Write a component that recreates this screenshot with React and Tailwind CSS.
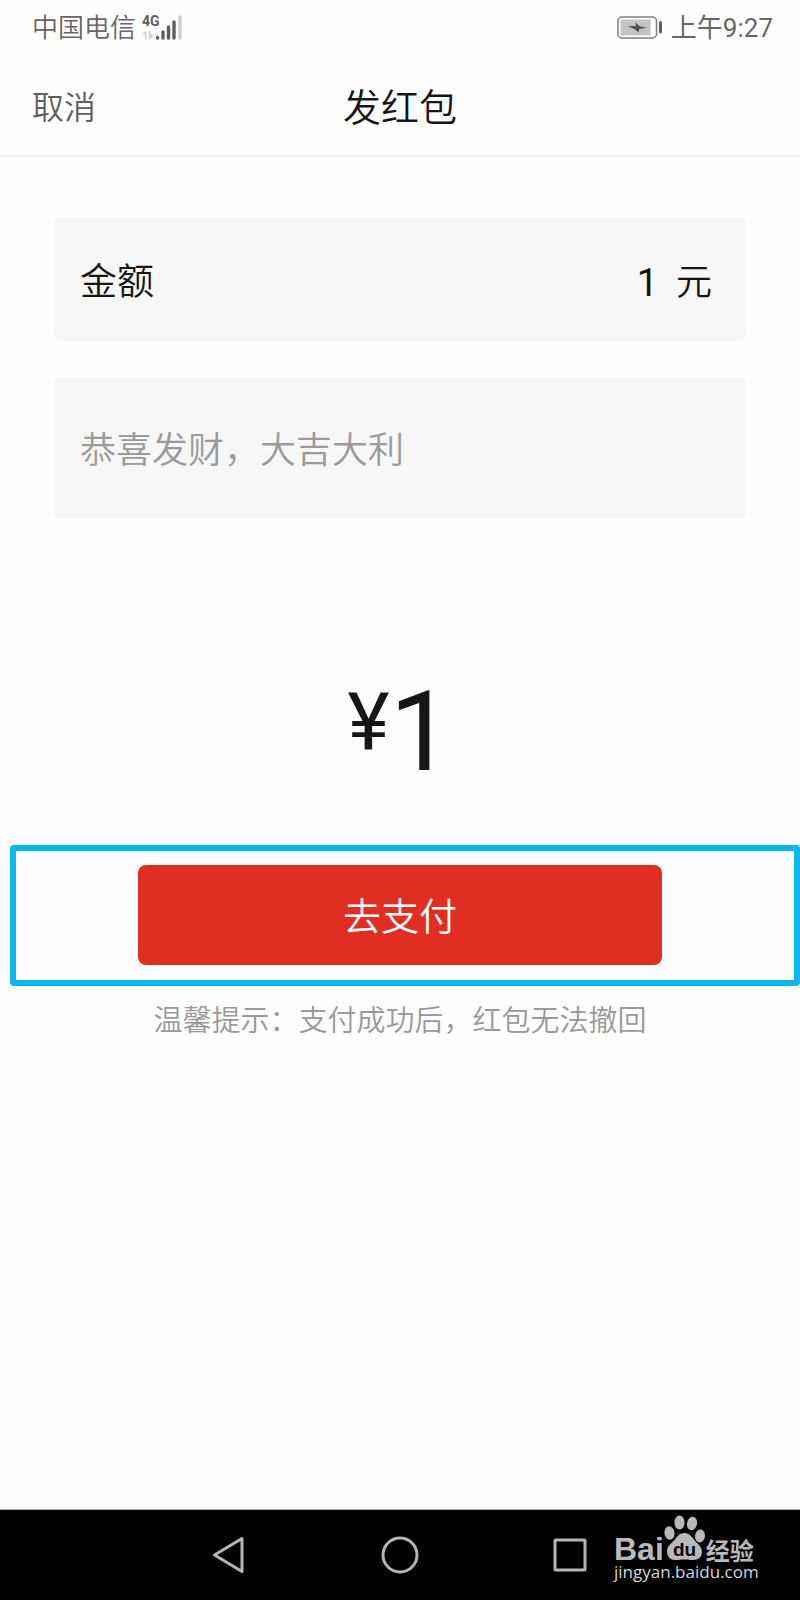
import React, { useState } from 'react';

function SignalIcon() {
  return (
    <svg width="42" height="32" viewBox="0 -3 42 32" aria-hidden="true">
      <text x="0" y="11" fontSize="14" fontWeight="700" fill="#5f5f5f" className="font-['Roboto',sans-serif]">
        4G
      </text>
      <path d="M0 19.500L4.500 15.500v9H3v-5zM7 16h1.500v3.500l4-0-5 5H7z" fill="#cfcfcf" />
      <g stroke="#5f5f5f" strokeWidth="3.4" strokeLinecap="round">
        <path d="M15.500 22.500v.5M21 17v6M26.500 12v11M32 7v16" />
      </g>
      <path d="M38 2v21" stroke="#cfcfcf" strokeWidth="3.4" strokeLinecap="round" />
    </svg>
  );
}

function BatteryIcon() {
  return (
    <svg width="46" height="24" viewBox="0 0 46 24" aria-hidden="true">
      <rect x="1" y="1" width="38.500" height="21" rx="4" fill="#fff" stroke="#7d7d7d" strokeWidth="1.500" />
      <rect x="3.500" y="3.500" width="30" height="16" fill="#c4c4c4" />
      <path d="M10.500 10.200l8.500-.2-.7-3.500L23 10.400l7.200 1.400L22.200 13l-.7 3.500-4-3.500z" fill="#4d4d4d" />
      <path d="M43.500 6.500v9.500" stroke="#5f5f5f" strokeWidth="3" strokeLinecap="round" />
    </svg>
  );
}

function StatusBar() {
  return (
    <div className="flex h-14 items-center justify-between pl-8 pr-[27px] text-[26px] leading-8 text-[#666]">
      <div className="flex items-center gap-[6px]">
        <span>中国电信</span>
        <SignalIcon />
      </div>
      <div className="flex items-center gap-2">
        <BatteryIcon />
        <span className="font-normal">上午9:27</span>
      </div>
    </div>
  );
}

function Header() {
  return (
    <header className="grid h-[101px] grid-cols-3 items-center border-b-2 border-[#efefef] px-8 pt-1">
      <button type="button" className="justify-self-start text-[32px] leading-10 text-[#5f5f5f]">
        取消
      </button>
      <h1 className="text-center text-[38px] leading-[48px]">发红包</h1>
    </header>
  );
}

function Paw() {
  return (
    <svg width="42" height="45" viewBox="0 0 42 45" aria-hidden="true">
      <g fill="#b9b9b9">
        <ellipse cx="5.500" cy="18" rx="5" ry="6.800" transform="rotate(-8 5.500 18)" />
        <ellipse cx="15.500" cy="7.500" rx="5" ry="7" />
        <ellipse cx="28" cy="8.500" rx="5" ry="6.800" transform="rotate(12 28 8.500)" />
        <ellipse cx="36" cy="21" rx="5" ry="6.500" transform="rotate(8 36 21)" />
        <path d="M20.500 18c-6 0-7.500 4.500-11 8-3.500 3.500-6.500 5.500-6.500 10.500C3 41.500 6.500 45 11 45c3 0 6-.5 9.500-.5s6 .5 9 .5c4.500 0 8.500-3 8.500-8 0-4.500-3-7-6-10C28.500 23.500 26.500 18 20.500 18z" />
      </g>
      <text x="20.500" y="41" textAnchor="middle" fontSize="19" fontWeight="700" fill="#000" className="font-['Liberation_Sans',sans-serif]">
        du
      </text>
    </svg>
  );
}

function Watermark() {
  return (
    <div className="absolute left-[614px] top-[5px] text-[#b9b9b9]">
      <div className="flex items-baseline">
        <span className="font-['Liberation_Sans',sans-serif] text-[32px] font-bold leading-6">Bai</span>
        <Paw />
        <span className="text-[24px] font-bold leading-6">经验</span>
      </div>
      <div className="font-['Open_Sans',sans-serif] text-[17px] font-normal leading-4 text-[#d6d6d6]">
        jingyan.baidu.com
      </div>
    </div>
  );
}

function NavBar() {
  return (
    <nav className="relative flex h-[91px] items-center justify-center gap-[131px] border-t border-[#aaa] bg-black">
      <button type="button" aria-label="返回">
        <svg width="40" height="40" viewBox="0 0 40 40" fill="none" stroke="#b5b5b5" strokeWidth="3" strokeLinejoin="round">
          <path d="M5.500 20L33 3.500v33z" />
        </svg>
      </button>
      <button type="button" aria-label="主页">
        <svg width="40" height="40" viewBox="0 0 40 40" fill="none" stroke="#b5b5b5" strokeWidth="3">
          <circle cx="20" cy="20" r="17" />
        </svg>
      </button>
      <button type="button" aria-label="最近任务">
        <svg width="40" height="40" viewBox="0 0 40 40" fill="none" stroke="#b5b5b5" strokeWidth="3">
          <rect x="4" y="5" width="30" height="30" rx="1" />
        </svg>
      </button>
      <Watermark />
    </nav>
  );
}

export default function App() {
  const [amount, setAmount] = useState('1');
  const [message, setMessage] = useState('');

  return (
    <div className="flex min-h-screen flex-col bg-[#fefefe] font-['Roboto','Noto_Sans_CJK_SC',sans-serif] font-[350] text-[#161616]">
      <StatusBar />
      <Header />

      <main className="flex-1">
        <form onSubmit={(e) => e.preventDefault()}>
          <div className="flex flex-col gap-9 px-[54px] pt-[60px]">
            {/* Amount */}
            <div className="flex h-[124px] items-center rounded-lg bg-[#f7f7f7] pl-[26px] pr-[34px] pt-2 text-[36px]">
              <label htmlFor="amount" className="shrink-0 text-[37px]">金额</label>
              <input
                id="amount"
                inputMode="decimal"
                className="min-w-0 flex-1 bg-transparent pr-[18px] text-right text-[38px] font-normal outline-none"
                value={amount}
                onChange={(e) => setAmount(e.target.value)}
              />
              <span>元</span>
            </div>

            {/* Greeting */}
            <div className="flex h-[142px] items-center rounded-lg bg-[#f7f7f7] px-[26px] pt-[6px]">
              <input
                aria-label="祝福语"
                placeholder="恭喜发财，大吉大利"
                className="w-full bg-transparent text-[36px] placeholder-[#9b9b9b] outline-none"
                value={message}
                onChange={(e) => setMessage(e.target.value)}
              />
            </div>
          </div>

          {/* Total */}
          <p className="mt-[151px] flex items-start justify-center font-normal">
            <span className="text-[80px] leading-[106px]">¥</span>
            <span className="text-[112px] leading-[124px]">{amount || '0'}</span>
          </p>

          {/* Pay button with the highlight frame round it */}
          <div className="relative mt-[51px] flex justify-center px-[138px] pb-[21px] pt-5">
            <div className="pointer-events-none absolute inset-y-0 left-[10px] right-0 rounded-[4px] border-[6px] border-[#0bb7ec]" />
            <button
              type="submit"
              className="h-[100px] w-full rounded-lg bg-[#e02e25] pt-1 text-[38px] leading-[48px] text-white"
            >
              去支付
            </button>
          </div>

          <p className="mt-[15px] text-center text-[29px] leading-10 text-[#999]">
            温馨提示：支付成功后，红包无法撤回
          </p>
        </form>
      </main>

      <NavBar />
    </div>
  );
}
